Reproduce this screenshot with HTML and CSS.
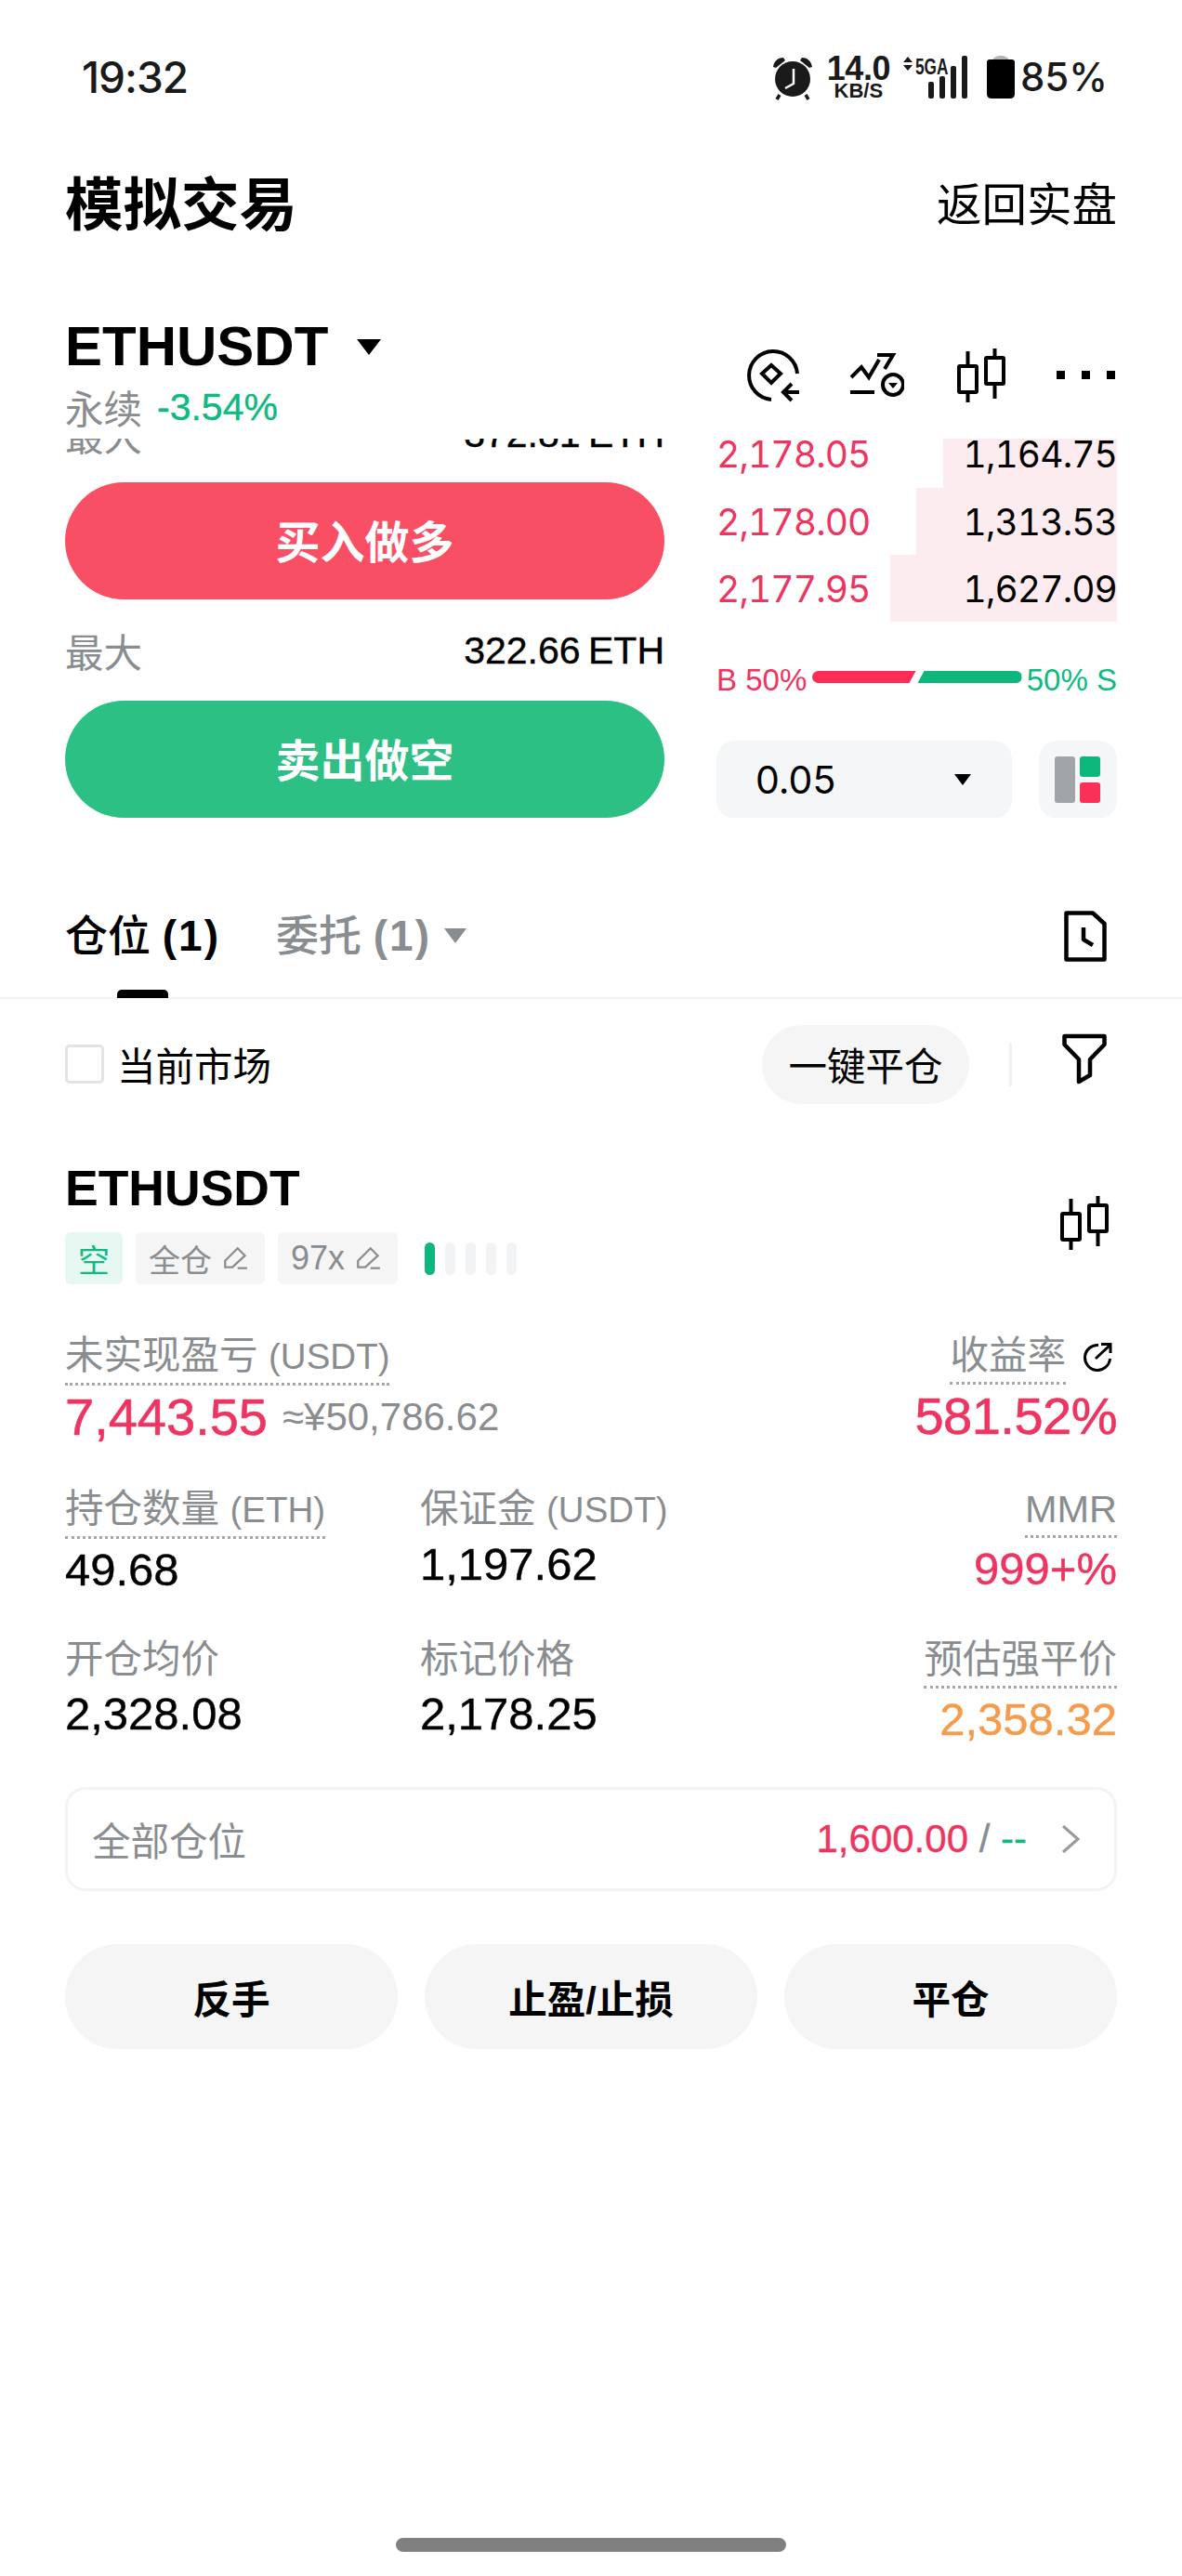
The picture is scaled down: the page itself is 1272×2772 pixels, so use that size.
FILE: index.html
```html
<!DOCTYPE html>
<html lang="zh-CN">
<head>
<meta charset="utf-8">
<title>模拟交易</title>
<link rel="stylesheet" href="styles.css">
</head>
<body>
<div class="page">
  <header class="status">
    <span class="clock">19:32</span>
    <div class="status-right">
      <svg class="alarm" width="44" height="48" viewBox="0 0 44 48"><path d="M1 12C2 5 7 2 12 2L14 5 4 13Z M43 12C42 5 37 2 32 2L30 5 40 13Z" fill="#1a1a1a"/><circle cx="22" cy="25" r="19" fill="#1a1a1a"/><path d="M8 42 5 47M36 42 39 47" stroke="#1a1a1a" stroke-width="3.5"/><path d="M23 14V30L14 35" stroke="#fff" stroke-width="2.5" fill="none" stroke-linejoin="round"/></svg>
      <div class="speed"><span class="speed-num">14.0</span><span class="speed-unit">KB/S</span></div>
      <div class="net">
        <svg width="72" height="46" viewBox="0 0 72 46"><path d="M0 7 5 1 10 7ZM0 10H10L5 16Z" fill="#1a1a1a"/><rect x="27" y="28" width="6" height="18" rx="2" fill="#1a1a1a"/><rect x="39" y="22" width="6" height="24" rx="2" fill="#1a1a1a"/><rect x="51" y="11" width="6" height="35" rx="2" fill="#1a1a1a"/><rect x="63" y="0" width="6" height="46" rx="2" fill="#1a1a1a"/></svg>
        <span class="net-label">5GA</span>
      </div>
      <svg class="battery" width="30" height="46" viewBox="0 0 28 46" preserveAspectRatio="none"><path d="M6 5C6 2 10 0 14 0S22 2 22 5Z" fill="#b5b5b5"/><path d="M3 4H25Q28 4 28 7V41Q28 46 23 46H5Q0 46 0 41V7Q0 4 3 4Z" fill="#000"/></svg>
      <span class="pct">85%</span>
    </div>
  </header>

  <div class="title-row">
    <h1 class="title">模拟交易</h1>
    <span class="back">返回实盘</span>
  </div>

  <div class="market">
    <div class="market-left">
      <div class="symbol-line"><span class="symbol">ETHUSDT</span><svg class="caret" width="26" height="17" viewBox="0 0 26 17"><path d="M0 0H26L13 17Z" fill="#000"/></svg></div>
      <div class="sub-line"><span class="perp">永续</span><span class="change">-3.54%</span></div>
    </div>
    <div class="tools">
      <svg width="58" height="58" viewBox="0 0 58 58" fill="none" stroke="#000" stroke-width="4"><path d="M56 27A26 26 0 1 0 28 55"/><path d="M28 18 38 27 28 37 18 27Z"/><path d="M58 47H42M50 38 41 47 50 56"/></svg>
      <svg width="58" height="58" viewBox="0 0 58 58" fill="none" stroke="#000" stroke-width="4"><path d="M1 31 12 20 20 31 31 12"/><path d="M29 7H46L37 22"/><path d="M0 47H26"/><circle cx="46" cy="39" r="11"/><path d="M41 37H51L46 43Z" fill="#000" stroke="none"/></svg>
      <svg width="52" height="58" viewBox="0 0 52 58" fill="none" stroke="#000" stroke-width="4"><rect x="2" y="19" width="19" height="28" rx="1"/><path d="M11.500 3V19M11.500 47V58"/><rect x="31" y="10" width="19" height="28" rx="1"/><path d="M40.500 0V10M40.500 38V54"/></svg>
      <div class="dots"><i></i><i></i><i></i></div>
    </div>
  </div>

  <div class="trade">
    <div class="trade-left">
      <div class="max-row max-first"><span class="max-label">最大</span><span class="max-val">372.81 ETH</span></div>
      <button class="act act-buy">买入做多</button>
      <div class="max-row"><span class="max-label">最大</span><span class="max-val">322.66 ETH</span></div>
      <button class="act act-sell">卖出做空</button>
    </div>
    <div class="trade-right">
      <div class="book">
        <div class="book-row book-first"><i class="depth" style="width:187px"></i><span class="bp">2,178.05</span><span class="bq">1,164.75</span></div>
        <div class="book-row"><i class="depth" style="width:216px"></i><span class="bp">2,178.00</span><span class="bq">1,313.53</span></div>
        <div class="book-row"><i class="depth" style="width:244px"></i><span class="bp">2,177.95</span><span class="bq">1,627.09</span></div>
      </div>
      <div class="ratio">
        <span class="ratio-b">B 50%</span>
        <div class="ratio-bar"><i class="seg-b"></i><i class="seg-s"></i></div>
        <span class="ratio-s">50% S</span>
      </div>
      <div class="controls">
        <div class="select"><span>0.05</span><svg width="18" height="12" viewBox="0 0 18 12"><path d="M0 0H18L9 12Z" fill="#000"/></svg></div>
        <div class="layout-btn"><svg width="50" height="50" viewBox="0 0 50 50"><rect x="0" y="0" width="22" height="50" rx="3" fill="#a2a5a8"/><rect x="27" y="0" width="22" height="22" rx="3" fill="#0db77c"/><rect x="27" y="28" width="22" height="22" rx="3" fill="#fb3057"/></svg></div>
      </div>
    </div>
  </div>

  <nav class="tabs">
    <span class="tab tab-on">仓位 <b class="count">(1)</b></span>
    <span class="tab tab-off"><span>委托 <b class="count">(1)</b></span><svg width="24" height="16" viewBox="0 0 24 16"><path d="M0 0H24L12 16Z" fill="#8a8d90"/></svg></span>
    <svg class="doc" width="46" height="55" viewBox="0 0 46 55" fill="none" stroke="#000" stroke-width="4.500" stroke-linejoin="round"><path d="M2.500 2.500H31L43.500 14V52.500H2.500Z"/><path d="M21 18V31L31 37"/></svg>
  </nav>

  <div class="filter-row">
    <i class="check"></i>
    <span class="check-label">当前市场</span>
    <span class="pill">一键平仓</span>
    <i class="vline"></i>
    <svg class="funnel" width="48" height="55" viewBox="0 0 48 55" fill="none" stroke="#000" stroke-width="4.500" stroke-linejoin="round"><path d="M2.500 3H45.500V12L30 28V45L18 52V28L2.500 12Z"/></svg>
  </div>

  <section class="pos">
    <div class="pos-head">
      <div>
        <div class="pos-symbol">ETHUSDT</div>
        <div class="tags">
          <span class="tag tag-short">空</span>
          <span class="tag">全仓<svg width="27" height="27" viewBox="0 0 24 24" fill="none" stroke="#8a8d90" stroke-width="2"><path d="M2 20V14L14 2 21 9 9 20ZM14 21H23"/></svg></span>
          <span class="tag tag-lev">97x<svg width="27" height="27" viewBox="0 0 24 24" fill="none" stroke="#8a8d90" stroke-width="2"><path d="M2 20V14L14 2 21 9 9 20ZM14 21H23"/></svg></span>
          <div class="levels"><i class="lv-on"></i><i></i><i></i><i></i><i></i></div>
        </div>
      </div>
      <svg class="pos-candle" width="52" height="58" viewBox="0 0 52 58" fill="none" stroke="#000" stroke-width="4"><rect x="2" y="19" width="19" height="28" rx="1"/><path d="M11.500 3V19M11.500 47V58"/><rect x="31" y="10" width="19" height="28" rx="1"/><path d="M40.500 0V10M40.500 38V54"/></svg>
    </div>

    <div class="pnl">
      <div class="cell">
        <span class="lbl lbl-dot">未实现盈亏 <span class="lat">(USDT)</span></span>
        <div class="val val-big"><span class="red">7,443.55</span><span class="approx">≈¥50,786.62</span></div>
      </div>
      <div class="cell cell-right">
        <div class="rate-line"><span class="lbl lbl-dot">收益率</span><svg width="32" height="32" viewBox="0 0 32 32" fill="none" stroke="#000" stroke-width="3"><path d="M17 3.500A13.500 13.500 0 1 0 29.500 18"/><path d="M14 18 30 3M20 2.500H30V12"/></svg></div>
        <div class="val val-big red rate-val">581.52%</div>
      </div>
    </div>

    <div class="metrics">
      <div class="cell"><span class="lbl lbl-dot">持仓数量 <span class="lat">(ETH)</span></span><div class="val">49.68</div></div>
      <div class="cell"><span class="lbl">保证金 <span class="lat">(USDT)</span></span><div class="val">1,197.62</div></div>
      <div class="cell cell-right"><span class="lbl lbl-dot">MMR</span><div class="val red">999+%</div></div>
      <div class="cell"><span class="lbl">开仓均价</span><div class="val">2,328.08</div></div>
      <div class="cell"><span class="lbl">标记价格</span><div class="val">2,178.25</div></div>
      <div class="cell cell-right"><span class="lbl lbl-dot">预估强平价</span><div class="val orange">2,358.32</div></div>
    </div>

    <div class="all-pos">
      <span class="all-label">全部仓位</span>
      <span class="all-val"><span class="red">1,600.00</span><span class="slash"> / </span><span class="green">--</span></span>
      <svg width="22" height="32" viewBox="0 0 22 32" fill="none" stroke="#999" stroke-width="3"><path d="M3 2 19 16 3 30"/></svg>
    </div>

    <div class="pos-actions">
      <button class="ghost">反手</button>
      <button class="ghost">止盈/止损</button>
      <button class="ghost">平仓</button>
    </div>
  </section>

  <div class="home-wrap"><i class="home"></i></div>
</div>
</body>
</html>
```
FILE: styles.css
```css
* { box-sizing: border-box; margin: 0; padding: 0; }
html, body { background: #fff; }
body {
  width: 1272px;
  height: 2772px;
  overflow: hidden;
  font-family: "Liberation Sans", "Noto Sans CJK SC", sans-serif;
  color: #000;
}
i { display: block; font-style: normal; }
button { border: 0; font-family: inherit; }
.page { width: 1272px; height: 2772px; display: flex; flex-direction: column; }

/* status bar */
.status { height: 166px; padding: 60px 80px 0 88px; display: flex; justify-content: space-between; align-items: flex-start; color: #1a1a1a; }
.clock { font-size: 46px; line-height: 46px; font-family: Inter, "Liberation Sans", sans-serif; font-weight: 500; letter-spacing: -1px; }
.status-right { display: flex; align-items: flex-start; }
.alarm { margin-right: 16px; }
.speed { width: 66px; margin-right: 15px; display: flex; flex-direction: column; align-items: center; }
.speed-num { font-size: 36px; line-height: 28px; font-weight: 700; letter-spacing: -.5px; }
.speed-unit { font-size: 22px; line-height: 20px; font-weight: 700; }
.net { position: relative; width: 72px; height: 46px; margin-right: 18px; }
.net-label { position: absolute; left: 13px; top: 0; font-size: 24px; line-height: 24px; font-weight: 700; transform: scaleX(.72); transform-origin: left top; }
.battery { margin-right: 6px; }
.pct { font-size: 42px; line-height: 46px; font-family: Inter, "Liberation Sans", sans-serif; font-weight: 500; }

/* title */
.title-row { height: 102px; padding: 7px 70px 0; display: flex; justify-content: space-between; align-items: center; }
.title { font-size: 62.500px; font-weight: 700; line-height: 70px; }
.back { font-size: 48.500px; line-height: 60px; }

/* market header */
.market { height: 204px; padding: 70px 70px 0; display: flex; justify-content: space-between; }
.symbol-line { height: 70px; display: flex; align-items: center; gap: 31px; }
.symbol { font-size: 60px; line-height: 70px; font-weight: 700; }
.sub-line { height: 60px; display: flex; align-items: center; gap: 16px; }
.perp { font-size: 41.500px; color: #8a8d90; }
.change { font-size: 41px; color: #10b981; -webkit-text-stroke: .4px #10b981; }
.tools { padding-top: 37px; padding-right: 2px; display: flex; gap: 54px; height: 95px; align-items: flex-start; }
.dots { display: flex; gap: 18px; padding-top: 24px; margin-left: 1px; }
.dots i { width: 9px; height: 9px; background: #000; }
.tools svg:nth-child(2) { margin-left: 1px; }
.tools svg:nth-child(3) { margin-left: 3px; }

/* trade panel */
.trade { height: 408px; padding: 0 70px; display: flex; justify-content: space-between; overflow: hidden; }
.trade-left { width: 645px; }
.max-row { height: 60px; margin-bottom: 24px; display: flex; justify-content: space-between; align-items: center; }
.max-first { margin-top: -35px; margin-bottom: 22px; }
.max-label { font-size: 41.500px; color: #8a8d90; }
.max-val { font-size: 41px; word-spacing: -3px; -webkit-text-stroke: .4px #000; }
.act { display: block; width: 100%; height: 126px; border-radius: 63px; color: #fff; font-size: 48px; font-weight: 700; margin-bottom: 25px; padding-bottom: 5px; }
.act-buy { background: #f94f64; }
.act-sell { background: #2dc084; }

.trade-right { width: 431px; }
.book-row { position: relative; height: 72px; display: flex; justify-content: space-between; align-items: center; font-family: Inter, "Liberation Sans", sans-serif; font-size: 39px; font-feature-settings: "tnum"; letter-spacing: -.9px; }
.book-first { height: 53px; align-items: flex-end; }
.book-first span { position: relative; line-height: 72px; height: 72px; margin-top: -19px; }
.depth { position: absolute; right: 0; top: 0; bottom: 0; background: #fdecef; }
.bp { position: relative; color: #ee3461; }
.bq { position: relative; }
.ratio { height: 60px; margin-top: 33px; display: flex; align-items: center; justify-content: space-between; font-size: 33px; }
.ratio-b { color: #ee3461; }
.ratio-s { color: #10b981; }
.ratio-bar { display: flex; gap: 2px; width: 226px; height: 13px; margin-top: -7px; }
.seg-b { flex: 1; background: #ff2d55; border-radius: 7px 0 0 7px; clip-path: polygon(0 0, 100% 0, calc(100% - 7px) 100%, 0 100%); }
.seg-s { flex: 1; background: #0db77c; border-radius: 0 7px 7px 0; clip-path: polygon(7px 0, 100% 0, 100% 100%, 0 100%); }
.controls { display: flex; justify-content: space-between; margin-top: 35px; }
.select { width: 318px; height: 84px; border-radius: 20px; background: #f5f6f7; padding: 0 44px 0 42px; display: flex; justify-content: space-between; align-items: center; font-size: 41px; font-family: Inter, "Liberation Sans", sans-serif; }
.layout-btn { width: 84px; height: 84px; border-radius: 20px; background: #f5f6f7; display: flex; align-items: center; justify-content: center; }

/* tabs */
.tabs { height: 195px; padding: 97px 82px 0 70px; border-bottom: 2px solid #f1f2f3; display: flex; align-items: flex-start; }
.tab { position: relative; font-size: 46px; line-height: 60px; font-weight: 500; white-space: nowrap; }
.count { font-weight: 700; letter-spacing: 2px; }
.tab-on { color: #000; width: 227px; }
.tab-on::after { content: ""; position: absolute; left: 56px; top: 88px; width: 55px; height: 9px; border-radius: 5px 5px 0 0; background: #000; }
.tab-off { color: #8a8d90; display: flex; align-items: center; gap: 14px; }
.doc { margin-left: auto; margin-top: 3px; margin-right: -1px; }

/* filter */
.filter-row { height: 140px; padding: 0 81px 0 70px; display: flex; align-items: center; }
.check { width: 42px; height: 42px; border: 3px solid #e2e3e5; border-radius: 5px; }
.check-label { font-size: 41.500px; margin-left: 14px; }
.pill { margin-left: auto; width: 223px; height: 85px; border-radius: 43px; background: #f5f5f5; font-size: 41.500px; display: flex; align-items: center; justify-content: center; }
.vline { width: 3px; height: 47px; margin: 0 54px 0 43px; background: #f0f0f0; }
.funnel { margin-top: -12px; }

/* position card */
.pos { padding: 34px 70px 0; flex: 1; display: flex; flex-direction: column; }
.pos-head { display: flex; justify-content: space-between; align-items: center; padding-right: 9px; }
.pos-symbol { font-size: 53.500px; line-height: 60px; font-weight: 700; }
.tags { margin-top: 17px; display: flex; gap: 14px; align-items: flex-start; height: 56px; }
.tag { height: 56px; padding: 0 18px 0 14px; border-radius: 6px; background: #f5f5f5; color: #8a8d90; font-size: 34px; display: flex; align-items: center; gap: 12px; }
.tag-short { background: #e7f8f2; color: #10b981; padding: 0 14px; }
.tag-lev { font-size: 36px; }
.levels { display: flex; gap: 11px; margin: 11px 0 0 15px; }
.levels i { width: 11px; height: 35px; border-radius: 6px; background: #f2f3f4; }
.levels .lv-on { background: #0db77c; }

.pnl { margin-top: 52px; margin-bottom: 40px; display: flex; justify-content: space-between; }
.cell { display: flex; flex-direction: column; align-items: flex-start; }
.cell-right { align-items: flex-end; }
.lbl { font-size: 41.500px; line-height: 50px; color: #8a8d90; white-space: nowrap; }
.lat { font-size: 38.500px; }
.lbl-dot { padding-bottom: 3px; border-bottom: 3px dotted #a4a6a8; }
.val { font-size: 49px; line-height: 66px; white-space: nowrap; -webkit-text-stroke: .4px; }
.val-big { font-size: 56px; line-height: 68px; display: flex; align-items: center; -webkit-text-stroke: .6px; }
.rate-val { letter-spacing: -.5px; }
.approx { font-size: 42px; color: #8a8d90; margin-left: 16px; -webkit-text-stroke: 0; }
.rate-line { display: flex; align-items: flex-start; gap: 18px; padding-right: 5px; }
.rate-line svg { margin-top: 10px; }
.red { color: #ee3461; }
.green { color: #10b981; }
.orange { color: #f59b4a; }

.metrics { display: grid; grid-template-columns: 382px 1fr auto; row-gap: 39px; }

.all-pos { margin-top: 40px; height: 112px; border: 3px solid #f2f3f4; border-radius: 22px; padding: 0 36px 0 26px; display: flex; align-items: center; }
.all-label { font-size: 41.500px; color: #8a8d90; }
.all-val { margin-left: auto; margin-right: 36px; font-size: 42px; white-space: nowrap; -webkit-text-stroke: .4px; }
.slash { color: #8a8d90; }

.pos-actions { margin-top: 57px; display: flex; justify-content: space-between; }
.ghost { width: 358px; height: 113px; border-radius: 57px; background: #f5f5f5; color: #000; font-size: 41.500px; font-weight: 700; }

.home-wrap { height: 41px; display: flex; justify-content: center; }
.home { width: 420px; height: 15px; border-radius: 8px; background: #808080; }
```
